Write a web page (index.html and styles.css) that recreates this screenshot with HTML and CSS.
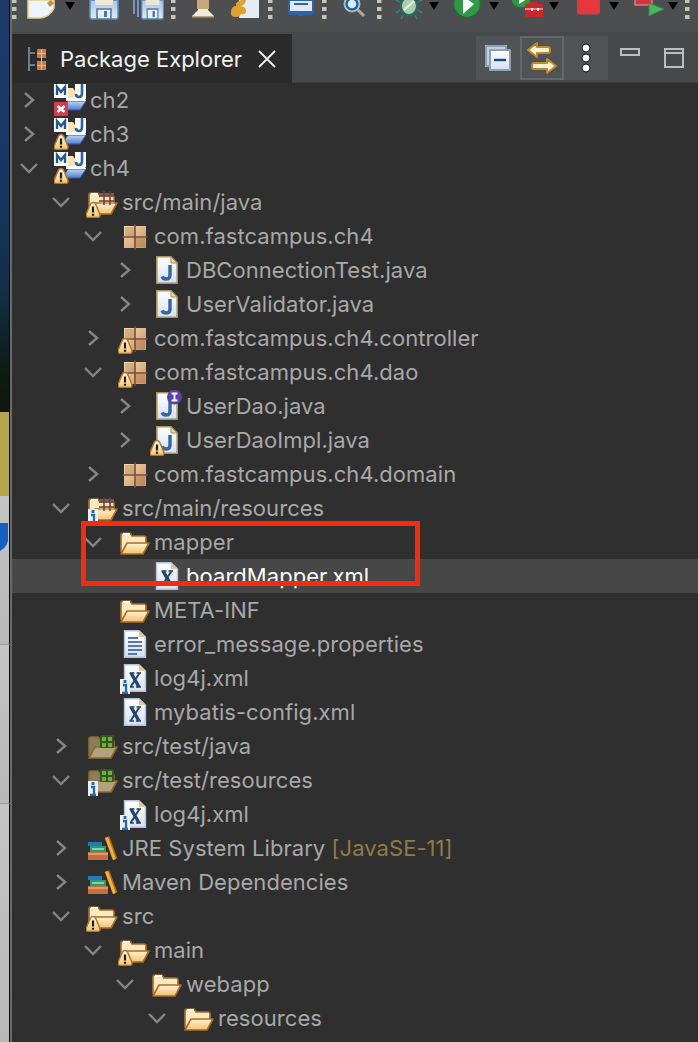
FILE: index.html
```html
<!DOCTYPE html>
<html lang="en">
<head>
<meta charset="utf-8">
<title>Package Explorer</title>
<link rel="stylesheet" href="styles.css">
</head>
<body>
<svg class="defs" aria-hidden="true">
  <defs>
    <linearGradient id="gFolder" x1="0" y1="0" x2="0" y2="1"><stop offset="0" stop-color="#fff3d2"/><stop offset="1" stop-color="#f2c06f"/></linearGradient>
    <linearGradient id="gPage" x1="0" y1="0" x2="0" y2="1"><stop offset="0" stop-color="#ffffff"/><stop offset="1" stop-color="#d5e0f2"/></linearGradient>
    <linearGradient id="gPkg" x1="0" y1="0" x2="1" y2="1"><stop offset="0" stop-color="#f2dcb6"/><stop offset="1" stop-color="#c8935f"/></linearGradient>
    <linearGradient id="gBlue" x1="0" y1="0" x2="0" y2="1"><stop offset="0" stop-color="#b9d7f5"/><stop offset="1" stop-color="#4f7fd0"/></linearGradient>
    <linearGradient id="gSave" x1="0" y1="0" x2="0" y2="1"><stop offset="0" stop-color="#a9c5e6"/><stop offset="1" stop-color="#dfeaf6"/></linearGradient>
    <linearGradient id="gWarn" x1="0" y1="0" x2="0" y2="1"><stop offset="0" stop-color="#fffbee"/><stop offset="1" stop-color="#f6c468"/></linearGradient>

    <symbol id="folder" viewBox="0 0 32 32">
      <path d="M3 26V9q0-2 2-2h7l2 3h12q2 0 2 2v5" fill="#fbe9bf" stroke="#a96c2b" stroke-width="1.6"/>
      <path d="M5 7h7v2H5z" fill="#fff"/>
      <path d="M3 28l6-11h22l-6 11z" fill="url(#gFolder)" stroke="#a96c2b" stroke-width="1.6" stroke-linejoin="round"/>
    </symbol>
    <symbol id="pkg" viewBox="0 0 32 32">
      <rect x="6" y="6" width="22" height="22" fill="url(#gPkg)"/>
      <path d="M7 7h9v9H7zM18 18h9v9h-9z" fill="#a9714a" fill-opacity=".35"/>
      <path d="M17 4v26M4 17h26" stroke="#7d4a38" stroke-width="1.6"/>
    </symbol>
    <symbol id="java" viewBox="0 0 32 32">
      <path d="M6.800 2.800H21l6.200 6.200v20.200H6.800z" fill="url(#gPage)" stroke="#a8945a" stroke-width="1.6"/>
      <path d="M21 3v6h6z" fill="#e9d9a6" stroke="#a8945a"/>
      <path d="M20 11v10q0 4-3.500 4T12 22.500" fill="none" stroke="#33689f" stroke-width="3.400"/>
    </symbol>
    <symbol id="xml" viewBox="0 0 32 32">
      <path d="M6.500 2.800H21l6.500 6.200v20.300H6.500z" fill="url(#gPage)" stroke="#b7c2d6" stroke-width="1.400"/>
      <path d="M21 3v6h6z" fill="#e3c98d"/>
      <path d="M13 11l8 14" stroke="#26436f" stroke-width="3.400"/>
      <path d="M21.500 11L12.500 25" stroke="#26436f" stroke-width="2"/>
      <path d="M11.500 11h5M18.500 11h4.500M11.500 25h4.500M18 25h5" stroke="#26436f" stroke-width="1.300"/>
    </symbol>
    <symbol id="props" viewBox="0 0 32 32">
      <path d="M6.500 2.800H21l6.500 6.200v20.300H6.500z" fill="url(#gPage)" stroke="#b7c2d6" stroke-width="1.400"/>
      <path d="M21 3v6h6z" fill="#e3c98d"/>
      <path d="M10 10h10M10 14h14M10 18h14M10 22h14M10 26h9" stroke="#5577b5" stroke-width="2"/>
    </symbol>
    <symbol id="srcgrid" viewBox="0 0 32 32">
      <path d="M14 7h14v13H14z" fill="#e7cfa9" fill-opacity=".35"/>
      <path d="M18 5v14M24 5v14M13 10h15M13 15h15" stroke="#6b3f34" stroke-width="1.500"/>
    </symbol>
    <symbol id="testfolder" viewBox="0 0 32 32">
      <path d="M3 26V9q0-2 2-2h7l2 3h12q2 0 2 2v5" fill="#8d7c5a" stroke="#8a6a36" stroke-width="1.600"/>
      <path d="M3 28l6-11h22l-6 11z" fill="#b3a27c" stroke="#8a6a36" stroke-width="1.600" stroke-linejoin="round"/>
      <rect x="14" y="5" width="14" height="13" rx="1.500" fill="#2d5a1f"/>
      <path d="M16 7h4v4h-4zM22 7h4v4h-4zM16 13h4v4h-4zM22 13h4v4h-4z" fill="#79a83f"/>
    </symbol>
    <symbol id="project" viewBox="0 0 32 32">
      <path d="M12 4h7l2 3h7v10H12z" fill="#fbe3ae"/>
      <path d="M14 17h18l-6 9H8z" fill="url(#gBlue)" stroke="#3c56a8"/>
      <path d="M12 14v3h20l-1-3z" fill="#fff"/>
      <rect x="0" y="0" width="14" height="14" fill="#fff"/>
      <path d="M3 11V3l4 5 4-5v8" fill="none" stroke="#21598f" stroke-width="2.400"/>
      <rect x="21" y="0" width="11" height="15" fill="#fff"/>
      <path d="M28 0v9q0 4-3 4t-3-3" fill="none" stroke="#2a64a0" stroke-width="2.600"/>
    </symbol>
    <symbol id="warn" viewBox="0 0 32 32">
      <path d="M7 16.500q2.200 0 3.200 3L13.800 28q.8 3.500-2.500 3.500H2.700Q-.6 31.500.2 28L3.800 19.500q1-3 3.200-3z" fill="url(#gWarn)" stroke="#b4752a" stroke-width="1.500" stroke-linejoin="round"/>
      <path d="M7 20.500v6M7 27.800v2" stroke="#1e1e1e" stroke-width="2.200"/>
    </symbol>
    <symbol id="err" viewBox="0 0 32 32">
      <rect x="0" y="18" width="14" height="14" fill="#d93a4e"/>
      <path d="M3.500 22l7 6M10.500 22l-7 6" stroke="#fff" stroke-width="2.600"/>
    </symbol>
    <symbol id="info" viewBox="0 0 32 32">
      <rect x="2" y="17" width="10" height="15" fill="#eef2f7"/>
      <path d="M7 18v3" stroke="#2a6cab" stroke-width="3"/>
      <path d="M5 23h3v7M4 31h6" stroke="#2a6cab" stroke-width="2.400" fill="none"/>
    </symbol>
    <symbol id="iface" viewBox="0 0 32 32">
      <circle cx="24.500" cy="7" r="7.500" fill="#5a3fa5"/>
      <path d="M21.500 3.500h6M21.500 10.500h6M24.500 3.500v7" stroke="#fff" stroke-width="1.800"/>
    </symbol>
    <symbol id="lib" viewBox="0 0 32 32">
      <rect x="2" y="20" width="20" height="8" fill="#c46f3d"/>
      <rect x="2" y="21" width="20" height="2" fill="#e39a62"/>
      <rect x="4" y="14" width="16" height="6" fill="#2f9a72"/>
      <rect x="6" y="16" width="12" height="2" fill="#7fd3ad"/>
      <rect x="2" y="10" width="14" height="4" fill="#2279b8"/>
      <path d="M21 5l8 22" stroke="#b8661f" stroke-width="5"/>
      <path d="M20.500 5.500l8 22" stroke="#f0b335" stroke-width="3"/>
    </symbol>
    <symbol id="cright" viewBox="0 0 22 22"><path d="M7 4l8 7-8 7" fill="none" stroke="#868686" stroke-width="2.400"/></symbol>
    <symbol id="cdown" viewBox="0 0 22 22"><path d="M3 7l8 8 8-8" fill="none" stroke="#868686" stroke-width="2.400"/></symbol>
    <symbol id="grip" viewBox="0 0 5 32"><path d="M0 0h4.500v3H0zM0 7h4.500v4H0zM0 15h4.500v4H0z" fill="#c9c4b8"/></symbol>
    <symbol id="arrow" viewBox="0 0 10 32"><path d="M0 2h10L5 10z" fill="#000"/></symbol>
    <symbol id="disk" viewBox="0 0 30 32">
      <path d="M1 0h28v17q0 2-2 2H3q-2 0-2-2z" fill="url(#gSave)" stroke="#5f8ac0" stroke-width="1.500"/>
      <rect x="6" y="0" width="18" height="5" fill="#eee6d6"/>
      <rect x="8" y="9" width="14" height="10" fill="#e8eef6" stroke="#4a76ac" stroke-width="1.500"/>
      <rect x="15" y="11" width="3" height="6" fill="#4a76ac"/>
    </symbol>
  </defs>
</svg>

<div class="page">
  <div class="desk">
    <div class="desk-dark"></div>
    <div class="desk-gold"></div>
    <div class="desk-gray desk-a">
      <svg class="shield" viewBox="0 0 8 28"><path d="M0 0h8v18q-2 7-8 10z" fill="#1560c4"/></svg>
    </div>
    <div class="desk-gray desk-b"></div>
    <div class="desk-gray desk-c"></div>
  </div>

  <main class="app">
    <div class="toolbar">
      <svg class="t-grip s1"><use href="#grip"/></svg>
      <svg class="t-new" viewBox="0 0 29 32"><path d="M1 0h26v8q-4 9-14 10H1z" fill="#eef4fb" stroke="#e3cf96" stroke-width="1.500"/><path d="M24 0l3 3-4 4-3-4z" fill="#c8903a"/></svg>
      <svg class="t-arrow a1"><use href="#arrow"/></svg>
      <svg class="t-save"><use href="#disk"/></svg>
      <svg class="t-saveall" viewBox="0 0 31 32"><path d="M1 0v14M5 0v17" stroke="#6f95c6" stroke-width="2"/><g transform="translate(8 0) scale(.77 1)"><use href="#disk" width="30" height="32"/></g></svg>
      <svg class="t-grip s2"><use href="#grip"/></svg>
      <svg class="t-lamp" viewBox="0 0 24 32"><path d="M7 0h10v10l6 6H1l6-6z" fill="#f0ebdf"/><path d="M6 0h12v9H6z" fill="#c9a877"/><path d="M1 16h22v1.500H1z" fill="#b9a57a"/></svg>
      <svg class="t-script" viewBox="0 0 29 32"><path d="M9 0h20v18H9z" fill="#e6ecf4"/><path d="M1 11q1-5 5-5-1-4 5-6h5q0 4-5 6 5 1 5 5t-5 3q-1 3-5 3-6 0-5-6z" fill="#dfa02f"/></svg>
      <svg class="t-grip s3"><use href="#grip"/></svg>
      <svg class="t-monitor" viewBox="0 0 26 32"><path d="M1 0h24v12H1z" fill="#dfe8f4" stroke="#2c64a8" stroke-width="2"/><path d="M6 3h14v2H6z" fill="#2c64a8"/><path d="M1 13h24v2H1zM11 14h4v2h-4z" fill="#2c64a8"/></svg>
      <svg class="t-grip s4"><use href="#grip"/></svg>
      <svg class="t-search" viewBox="0 0 24 32"><circle cx="9" cy="4" r="8" fill="#cfe0ec" stroke="#9eb2bf" stroke-width="1"/><circle cx="9" cy="4" r="5.500" fill="#dbe8f0" stroke="#17659f" stroke-width="2.400"/><path d="M14 9l7 7" stroke="#aaaaaa" stroke-width="3"/></svg>
      <svg class="t-grip s5"><use href="#grip"/></svg>
      <svg class="t-bug" viewBox="0 0 28 32"><ellipse cx="14" cy="6" rx="8" ry="9" fill="#a9d0a8" stroke="#1f6f6f" stroke-width="2"/><path d="M9 10l10-9" stroke="#e4efe0" stroke-width="2"/><path d="M5 2L1 0M5 10L1 13M23 2l4-2M23 10l4 3M8 15l-2 4M20 15l2 4" stroke="#2d8277" stroke-width="1.600"/></svg>
      <svg class="t-arrow a2"><use href="#arrow"/></svg>
      <svg class="t-run" viewBox="0 0 28 32"><circle cx="14" cy="4" r="13.500" fill="#2f9a45" stroke="#1d6f36" stroke-width="1.500"/><path d="M10-4l11 8-11 10z" fill="#fff"/></svg>
      <svg class="t-arrow a3"><use href="#arrow"/></svg>
      <svg class="t-debug" viewBox="0 0 33 32"><circle cx="10" cy="-2" r="10" fill="#2f9a45" stroke="#1d6f36"/><path d="M8-6l8 5-8 5z" fill="#fff"/><path d="M14 4h4V2h8v2h6v13H14z" fill="#c9262b"/><path d="M14 9h18" stroke="#f5a0a0" stroke-width="1.500"/><path d="M20 8h2v3h-2zM26 8h2v3h-2z" fill="#fff"/></svg>
      <svg class="t-arrow a4"><use href="#arrow"/></svg>
      <svg class="t-stop" viewBox="0 0 23 32"><rect x=".5" y="-6" width="22" height="20" rx="1.500" fill="#e8363f" stroke="#b8484c"/></svg>
      <svg class="t-arrow a5"><use href="#arrow"/></svg>
      <svg class="t-ext" viewBox="0 0 30 32"><rect x="1" y="-6" width="17" height="11" fill="#d8323a" stroke="#e8a0a0"/><path d="M15 3l15 6-15 7z" fill="#4fb35e" stroke="#2f8a46"/></svg>
      <svg class="t-arrow a6"><use href="#arrow"/></svg>
      <svg class="t-grip s6"><use href="#grip"/></svg>
    </div>

    <div class="tabbar">
      <div class="tab">
        <svg class="tab-icon" viewBox="0 0 18 24"><path d="M1 0v24M1 6h6M1 18h6" stroke="#6f7d8c" stroke-width="2" fill="none"/><path d="M9 2h9v9H9zM9 14h9v9H9z" fill="#c87d45"/><path d="M13.500 2v21M9 6.500h9M9 18.500h9" stroke="#e6c29c" stroke-width="1"/></svg>
        <span class="tab-title">Package Explorer</span>
        <svg class="tab-close" viewBox="0 0 18 18"><path d="M1 1l16 16M17 1L1 17" stroke="#f0f0f0" stroke-width="1.800"/></svg>
      </div>
      <div class="view-tools">
        <button class="vbtn" type="button" aria-label="Collapse All"><svg viewBox="0 0 26 26" class="vicon"><rect x="1" y="1" width="20" height="20" fill="#b9d3e6" stroke="#8fa0b4" stroke-width="2"/><rect x="5" y="5" width="20" height="20" fill="url(#gPage)" stroke="#8fa0b4" stroke-width="2"/><path d="M9 15h12" stroke="#0d4a80" stroke-width="2.400"/></svg></button>
        <button class="vbtn vbtn-on" type="button" aria-label="Link with Editor"><svg viewBox="0 0 32 32" class="vicon-l"><path d="M2 8l9-7v4h11q2 0 2 3t-2 3H11v4z" fill="#fff2cf" stroke="#bc8a2e" stroke-width="2" stroke-linejoin="round"/><path d="M30 24l-9-7v4H8q-2 0-2 3t2 3h13v4z" fill="#fff2cf" stroke="#bc8a2e" stroke-width="2" stroke-linejoin="round"/></svg></button>
        <button class="vbtn" type="button" aria-label="View Menu"><svg viewBox="0 0 10 30" class="vicon-m"><circle cx="5" cy="5" r="4" fill="#fff" stroke="#111"/><circle cx="5" cy="15" r="4" fill="#fff" stroke="#111"/><circle cx="5" cy="25" r="4" fill="#fff" stroke="#111"/></svg></button>
      </div>
      <svg class="win-min" viewBox="0 0 20 8"><rect x="1" y="1" width="18" height="6" fill="none" stroke="#bdbdbd" stroke-width="2"/></svg>
      <svg class="win-max" viewBox="0 0 20 20"><rect x="1" y="1" width="18" height="18" fill="none" stroke="#bdbdbd" stroke-width="2"/><path d="M1 5h18" stroke="#bdbdbd" stroke-width="2"/></svg>
    </div>

    <div class="tree">
      <div class="row l0"><svg class="tw"><use href="#cright"/></svg><svg class="ico"><use href="#project"/><use href="#err"/></svg><span class="lbl">ch2</span></div>
      <div class="row l0"><svg class="tw"><use href="#cright"/></svg><svg class="ico"><use href="#project"/><use href="#warn"/></svg><span class="lbl">ch3</span></div>
      <div class="row l0"><svg class="tw"><use href="#cdown"/></svg><svg class="ico"><use href="#project"/><use href="#warn"/></svg><span class="lbl">ch4</span></div>
      <div class="row l1"><svg class="tw"><use href="#cdown"/></svg><svg class="ico"><use href="#folder"/><use href="#srcgrid"/><use href="#warn"/></svg><span class="lbl">src/main/java</span></div>
      <div class="row l2"><svg class="tw"><use href="#cdown"/></svg><svg class="ico"><use href="#pkg"/></svg><span class="lbl">com.fastcampus.ch4</span></div>
      <div class="row l3"><svg class="tw"><use href="#cright"/></svg><svg class="ico"><use href="#java"/></svg><span class="lbl">DBConnectionTest.java</span></div>
      <div class="row l3"><svg class="tw"><use href="#cright"/></svg><svg class="ico"><use href="#java"/></svg><span class="lbl">UserValidator.java</span></div>
      <div class="row l2"><svg class="tw"><use href="#cright"/></svg><svg class="ico"><use href="#pkg"/><use href="#warn"/></svg><span class="lbl">com.fastcampus.ch4.controller</span></div>
      <div class="row l2"><svg class="tw"><use href="#cdown"/></svg><svg class="ico"><use href="#pkg"/><use href="#warn"/></svg><span class="lbl">com.fastcampus.ch4.dao</span></div>
      <div class="row l3"><svg class="tw"><use href="#cright"/></svg><svg class="ico"><use href="#java"/><use href="#iface"/></svg><span class="lbl">UserDao.java</span></div>
      <div class="row l3"><svg class="tw"><use href="#cright"/></svg><svg class="ico"><use href="#java"/><use href="#warn"/></svg><span class="lbl">UserDaoImpl.java</span></div>
      <div class="row l2"><svg class="tw"><use href="#cright"/></svg><svg class="ico"><use href="#pkg"/></svg><span class="lbl">com.fastcampus.ch4.domain</span></div>
      <div class="row l1"><svg class="tw"><use href="#cdown"/></svg><svg class="ico"><use href="#folder"/><use href="#srcgrid"/><use href="#info"/></svg><span class="lbl">src/main/resources</span></div>
      <div class="row l2"><svg class="tw"><use href="#cdown"/></svg><svg class="ico"><use href="#folder"/></svg><span class="lbl">mapper</span></div>
      <div class="row l3 sel"><span class="tw"></span><svg class="ico"><use href="#xml"/></svg><span class="lbl">boardMapper.xml</span></div>
      <div class="row l2"><span class="tw"></span><svg class="ico"><use href="#folder"/></svg><span class="lbl">META-INF</span></div>
      <div class="row l2"><span class="tw"></span><svg class="ico"><use href="#props"/></svg><span class="lbl">error_message.properties</span></div>
      <div class="row l2"><span class="tw"></span><svg class="ico"><use href="#xml"/><use href="#info"/></svg><span class="lbl">log4j.xml</span></div>
      <div class="row l2"><span class="tw"></span><svg class="ico"><use href="#xml"/></svg><span class="lbl">mybatis-config.xml</span></div>
      <div class="row l1"><svg class="tw"><use href="#cright"/></svg><svg class="ico"><use href="#testfolder"/></svg><span class="lbl">src/test/java</span></div>
      <div class="row l1"><svg class="tw"><use href="#cdown"/></svg><svg class="ico"><use href="#testfolder"/><use href="#info"/></svg><span class="lbl">src/test/resources</span></div>
      <div class="row l2"><span class="tw"></span><svg class="ico"><use href="#xml"/><use href="#info"/></svg><span class="lbl">log4j.xml</span></div>
      <div class="row l1"><svg class="tw"><use href="#cright"/></svg><svg class="ico"><use href="#lib"/></svg><span class="lbl">JRE System Library <span class="deco">[JavaSE-11]</span></span></div>
      <div class="row l1"><svg class="tw"><use href="#cright"/></svg><svg class="ico"><use href="#lib"/></svg><span class="lbl">Maven Dependencies</span></div>
      <div class="row l1"><svg class="tw"><use href="#cdown"/></svg><svg class="ico"><use href="#folder"/><use href="#warn"/></svg><span class="lbl">src</span></div>
      <div class="row l2"><svg class="tw"><use href="#cdown"/></svg><svg class="ico"><use href="#folder"/><use href="#warn"/></svg><span class="lbl">main</span></div>
      <div class="row l3"><svg class="tw"><use href="#cdown"/></svg><svg class="ico"><use href="#folder"/></svg><span class="lbl">webapp</span></div>
      <div class="row l4"><svg class="tw"><use href="#cdown"/></svg><svg class="ico"><use href="#folder"/></svg><span class="lbl">resources</span></div>
    </div>
  </main>
  <div class="annotation"></div>
</div>
</body>
</html>
```

FILE: styles.css
```css
* { box-sizing: border-box; }
html, body { margin: 0; padding: 0; }
body {
  width: 698px;
  height: 1042px;
  overflow: hidden;
  background: #2f2f2f;
  font-family: Inter, "Liberation Sans", sans-serif;
}
.defs { position: absolute; width: 0; height: 0; }
.page { position: relative; display: flex; width: 698px; height: 1042px; overflow: hidden; }

/* desktop sliver */
.desk { width: 12px; flex: none; display: flex; flex-direction: column; border-right: 2px solid #6a6a6a; }
.desk > div { border-right: 1px solid #0b0b0b; }
.desk-dark { height: 412px; background: linear-gradient(180deg, #1d3b69 0%, #17365f 45%, #123048 70%, #0d1c14 90%, #101510 100%); }
.desk-gold { height: 84px; background: #b7a349; }
.desk-gray { background: linear-gradient(180deg, #c4c4c4, #b8b8b8); border-bottom: 1px solid #999; }
.desk-a { height: 149px; padding-top: 27px; }
.desk-b { height: 159px; }
.desk-c { flex: 1; border-bottom: 0; }
.shield { display: block; width: 8px; height: 28px; }

.app { flex: 1; min-width: 0; display: flex; flex-direction: column; }

/* main toolbar */
.toolbar { height: 32px; flex: none; display: flex; background: #4c4e50; overflow: hidden; }
.toolbar svg { flex: none; height: 32px; display: block; }
.t-grip { width: 5px; }
.t-arrow { width: 10px; }
.s2 { margin-left: 7px; }
.s3 { margin-left: 9px; }
.s4 { margin-left: 8px; }
.s5 { margin-left: 10px; }
.s6 { margin-left: 7px; }
.t-new { width: 29px; margin-left: 10px; }
.a1 { margin-left: 9px; }
.t-save { width: 30px; margin-left: 14px; }
.t-saveall { width: 31px; margin-left: 14px; }
.t-lamp { width: 24px; margin-left: 15px; }
.t-script { width: 29px; margin-left: 15px; }
.t-monitor { width: 26px; margin-left: 15px; }
.t-search { width: 24px; margin-left: 16px; }
.t-bug { width: 28px; margin-left: 13px; }
.a2 { margin-left: 6px; }
.t-run { width: 28px; margin-left: 14px; }
.a3 { margin-left: 8px; }
.t-debug { width: 33px; margin-left: 12px; }
.a4 { margin-left: 5px; }
.t-stop { width: 23px; margin-left: 18px; }
.a5 { margin-left: 9px; }
.t-ext { width: 30px; margin-left: 15px; }
.a6 { margin-left: 4px; }

/* tabs */
.tabbar { height: 51px; flex: none; display: flex; align-items: flex-start; background: #46484a; border-bottom: 1px solid #3c3d3e; }
.tab { width: 280px; height: 49px; margin-top: 2px; flex: none; display: flex; align-items: center; padding-left: 16px; background: #2b2b2b; }
.tab-icon { width: 18px; height: 24px; flex: none; }
.tab-title { margin-left: 14px; font-size: 22px; color: #f2f2f2; white-space: nowrap; width: 198px; }
.tab-close { width: 18px; height: 18px; flex: none; }
.view-tools { margin-left: auto; margin-top: 4px; display: flex; background: #4f5356; }
.vbtn { width: 44px; height: 44px; padding: 0; border: 0; background: none; display: flex; align-items: center; justify-content: center; }
.vbtn-on { border: 2px solid #63676b; }
.vicon { width: 26px; height: 26px; }
.vicon-l { width: 32px; height: 32px; }
.vicon-m { width: 10px; height: 30px; }
.win-min { width: 20px; height: 8px; margin: 16px 0 0 12px; flex: none; }
.win-max { width: 20px; height: 20px; margin: 16px 14px 0 24px; flex: none; }

/* tree */
.tree { flex: 1; min-height: 0; overflow: hidden; background: #2f2f2f; }
.row { height: 34px; display: flex; align-items: center; }
.l0 { padding-left: 6px; }
.l1 { padding-left: 38px; }
.l2 { padding-left: 70px; }
.l3 { padding-left: 102px; }
.l4 { padding-left: 134px; }
.sel { background: #474747; }
.sel .lbl { color: #fff; }
.tw { width: 22px; height: 22px; flex: none; margin-right: 14px; display: block; }
.ico { width: 32px; height: 32px; flex: none; display: block; overflow: visible; }
.lbl { margin-left: 4px; font-size: 22px; letter-spacing: .05px; color: #a8a8a8; white-space: nowrap; }
.deco { color: #8f7a48; }

/* red marker over the screenshot */
.annotation {
  position: absolute;
  left: 81px;
  top: 521px;
  width: 339px;
  height: 65px;
  border: 5px solid #f42b0d;
}
```
